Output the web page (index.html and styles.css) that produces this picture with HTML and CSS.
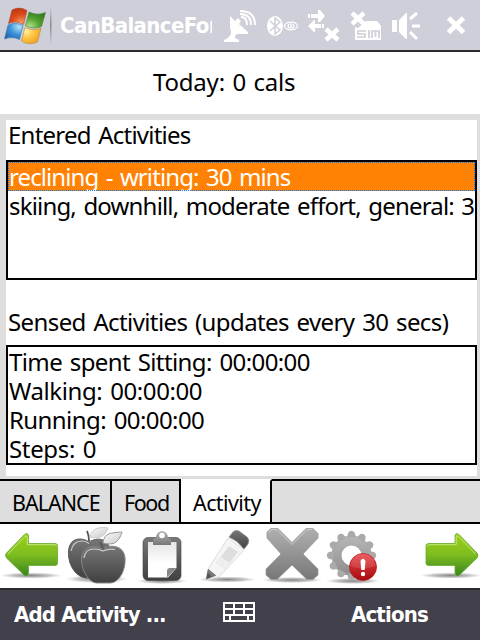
FILE: index.html
```
<!DOCTYPE html>
<html lang="en">
<head>
<meta charset="utf-8">
<title>CanBalance</title>
<link rel="stylesheet" href="styles.css">
</head>
<body>
<div class="screen">
  <header class="titlebar">
    <svg class="flag" width="54" height="50" viewBox="0 0 54 50">
      <defs>
        <radialGradient id="fr" cx=".7" cy=".9" r="1"><stop offset="0" stop-color="#f79b62"/><stop offset=".5" stop-color="#dc4c1c"/><stop offset="1" stop-color="#b8320e"/></radialGradient>
        <radialGradient id="fg" cx=".2" cy=".9" r="1"><stop offset="0" stop-color="#b5e08a"/><stop offset=".5" stop-color="#55a330"/><stop offset="1" stop-color="#2f7d1c"/></radialGradient>
        <radialGradient id="fb" cx=".8" cy=".2" r="1"><stop offset="0" stop-color="#b6e4fb"/><stop offset=".5" stop-color="#3e93d8"/><stop offset="1" stop-color="#1660ae"/></radialGradient>
        <radialGradient id="fy" cx=".2" cy=".2" r="1"><stop offset="0" stop-color="#fff4a0"/><stop offset=".5" stop-color="#fdc23c"/><stop offset="1" stop-color="#ee9420"/></radialGradient>
        <linearGradient id="sep" x1="0" y1="0" x2="0" y2="1"><stop offset="0" stop-color="#808080" stop-opacity="0"/><stop offset=".5" stop-color="#888"/><stop offset="1" stop-color="#808080" stop-opacity="0"/></linearGradient>
      </defs>
      <path d="M12 10Q19 6 27 10.500L23.500 24.500Q16 20 8.500 23.500Z" fill="url(#fr)" stroke="#a85038" stroke-width=".6"/>
      <path d="M29 12Q37 16 45.500 12.500L41.500 26.500Q33 30 25.500 25.500Z" fill="url(#fg)" stroke="#4c8038" stroke-width=".6"/>
      <path d="M8 25Q15 21.500 23 25.500L19.500 39.500Q12 36 4.500 39Z" fill="url(#fb)" stroke="#4478a8" stroke-width=".6"/>
      <path d="M25 27.500Q33 31.500 41 28L37.500 42Q29 46 21.500 41Z" fill="url(#fy)" stroke="#b08848" stroke-width=".6"/>
      <rect x="50" y="7" width="1.500" height="37" fill="url(#sep)"/>
    </svg>
    <h1 class="title">CanBalanceFor</h1>
    <svg class="status" width="265" height="50" viewBox="215 0 265 50" fill="#fff" stroke="none">
      <path d="M230 16L235 21L238 18L241 21L239 24L248 32V34H237L235 36V38L239 40V42H224V40L228 38L231 34V31L230 29Z"/>
      <g fill="none" stroke="#fff" stroke-width="2"><path d="M241 17Q247 17 247 25M240 14Q251 14 251 25M240 11Q255 11 255 25"/></g>
      <ellipse cx="275" cy="26" rx="8" ry="10"/>
      <path d="M270 21L280 30L275 34V18L280 22L270 31" fill="none" stroke="#cecfd8" stroke-width="1.500"/>
      <g fill="none" stroke="#fff" stroke-width="1.200"><ellipse cx="291" cy="26" rx="6.500" ry="3.800"/><ellipse cx="291" cy="26" rx="3" ry="2"/></g><circle cx="291" cy="26" r="1"/>
      <path d="M308 14H310V18H308ZM311 14H318V10H320L325 16L320 22H318V18H311ZM308 26L314 20H315V24H321V28H315V32H314ZM322 24H324V28H322Z"/>
      <path d="M326 29L338 40M338 29L326 40M352 13L364 24M364 13L352 24" stroke="#fff" stroke-width="4.500"/>
      <path d="M355 27L358 28L364 23L366 21H377L381 26V40H355Z"/>
      <path d="M366 31H358V34H365V37H357M369 30V38M372 38V31H379V38M375.500 31V37" fill="none" stroke="#cecfd8" stroke-width="1.700"/>
      <path d="M392 20H397V32H392ZM399 20L406 13H407V39H406L399 32Z"/>
      <path d="M410 19L417 13M412 26H420M410 32L417 39" fill="none" stroke="#fff" stroke-width="3"/>
      <path d="M448.500 18L463.500 32.500M463.500 18L448.500 32.500" stroke="#fff" stroke-width="5"/>
    </svg>
  </header>
  <div class="today"><span class="t0">Today: 0 cals</span></div>
  <main class="frame">
    <section class="panel">
      <h2 class="label entered"><span class="t1">Entered Activities</span></h2>
      <ul class="list">
        <li class="selected"><span class="t2">reclining - writing: 30 mins</span></li>
        <li><span class="t3">skiing, downhill, moderate effort, general: 3</span></li>
      </ul>
      <h2 class="label sensed"><span class="t4">Sensed Activities (updates every 30 secs)</span></h2>
      <ul class="list">
        <li><span class="t5">Time spent Sitting: 00:00:00</span></li>
        <li><span class="t6">Walking: 00:00:00</span></li>
        <li><span class="t7">Running: 00:00:00</span></li>
        <li><span class="t8">Steps: 0</span></li>
      </ul>
    </section>
  </main>
  <nav class="tabs">
    <div class="tab balance"><span>BALANCE</span></div>
    <div class="tab food"><span>Food</span></div>
    <div class="tab active"><span>Activity</span></div>
    <div class="rest"></div>
  </nav>
  <div class="toolbar">
    <svg width="480" height="64" viewBox="0 524 480 64">
      <defs>
        <linearGradient id="gr" x1="0" y1="0" x2="0" y2="1"><stop offset="0" stop-color="#9bd018"/><stop offset=".5" stop-color="#7fbd20"/><stop offset="1" stop-color="#368520"/></linearGradient>
        <linearGradient id="ap" x1="0" y1="0" x2="0" y2="1"><stop offset="0" stop-color="#777"/><stop offset="1" stop-color="#404040"/></linearGradient>
        <linearGradient id="lg" x1="0" y1="0" x2="0" y2="1"><stop offset="0" stop-color="#b0b0b0"/><stop offset="1" stop-color="#777"/></linearGradient>
        <linearGradient id="gg" gradientUnits="userSpaceOnUse" x1="0" y1="-24" x2="0" y2="24"><stop offset="0" stop-color="#bcbcbc"/><stop offset="1" stop-color="#888"/></linearGradient>
        <linearGradient id="pg" x1="0" y1="0" x2="0" y2="1"><stop offset="0" stop-color="#e4e4e4"/><stop offset=".6" stop-color="#fff"/></linearGradient>
        <linearGradient id="lf" x1="0" y1="0" x2="1" y2="1"><stop offset="0" stop-color="#fafafa"/><stop offset="1" stop-color="#cacaca"/></linearGradient>
        <linearGradient id="rd" x1="0" y1="0" x2="0" y2="1"><stop offset="0" stop-color="#e8464a"/><stop offset="1" stop-color="#a80c10"/></linearGradient>
        <radialGradient id="sh"><stop offset="0" stop-color="#777" stop-opacity=".9"/><stop offset=".6" stop-color="#888" stop-opacity=".5"/><stop offset="1" stop-color="#999" stop-opacity="0"/></radialGradient>
      </defs>
      <g fill="url(#sh)">
        <ellipse cx="31" cy="575.500" rx="31" ry="3"/><ellipse cx="97" cy="579" rx="31" ry="4"/><ellipse cx="162" cy="581" rx="25" ry="3"/><ellipse cx="227" cy="579.500" rx="29" ry="3"/><ellipse cx="292" cy="580" rx="30" ry="3"/><ellipse cx="353" cy="581" rx="27" ry="3"/><ellipse cx="451" cy="575.500" rx="31" ry="3"/>
      </g>
      <g id="arrow">
        <path d="M6.500 553L24 535Q28 531.500 28.500 536V543.500H55Q57.500 543.500 57.500 546V563Q57.500 565.500 55 565.500H28.500V573Q28 577.500 24 575L6.500 558Q4.500 555 6.500 553Z" fill="url(#gr)" stroke="#6aaa2c" stroke-width=".8"/>
        <path d="M8 554L25 536.500Q27 535 27.300 537V544.700H55Q56.300 545 56.300 546.500" fill="none" stroke="#c4e77c" stroke-width="1"/>
      </g>
      <use href="#arrow" transform="translate(483.500 0) scale(-1 1)"/>
      <g stroke="#555" stroke-width="1">
        <path d="M89 542C82 537 69 537 68.500 552C68 566 77 578 87 578H98C107 576 112 565 110 550C108 538 97 537 89 542Z" fill="url(#ap)"/>
        <path d="M89 541Q89 535 87 531" fill="none" stroke-width="1.800"/>
        <path d="M90 537C92 527 101 527 108 528C105 537 99 539 90 537Z" fill="url(#lf)" stroke="#ccc"/>
        <path d="M102 549C95 544 82 546 81.500 559C81 570 89 583 97 583H110C119 583 126 570 125 558C124 545 110 544 102 549Z" fill="url(#ap)" stroke="#888"/>
        <path d="M103 549Q102 545 100 542" fill="none" stroke-width="1.800"/>
        <path d="M103 543C104 532 112 533 122 532C119 542 114 546 103 543Z" fill="url(#lf)" stroke="#999"/>
      </g>
      <path d="M71 551Q73 541 82 541Q86 541 89 543.500M84 558Q85 549 94 549Q99 549 103 551Q109 548.500 115 549.500" fill="none" stroke="#ccc" stroke-width="1.200"/>
      <rect x="143" y="537.500" width="38" height="43" rx="5" fill="url(#ap)" stroke="#444" stroke-width=".6"/>
      <path d="M148 542H176.500V568L168 577.500H148Z" fill="url(#pg)"/>
      <path d="M176.500 568L167 577.500V571Q167 568 170 568Z" fill="#888"/>
      <path d="M153 545V541Q153 538 156 538C156 529 168 529 168 538Q171 538 171 541V545Z" fill="url(#lg)"/><circle cx="162" cy="535.500" r="2.800" fill="#fff"/>
      <path d="M208 569L228 538L244 550L219 577L206 579.500Z" fill="#f5f5f5" stroke="#ddd" stroke-width="1"/>
      <path d="M216 563L229 546L238 552L225 569Z" fill="#dedede"/><path d="M216 563L221 557L230 563L225 569Z" fill="#eee"/>
      <path d="M208 569L216 575.500L206 579.500Z" fill="#555"/><path d="M208 569L216 575.500L212 577L208 573Z" fill="#777"/>
      <path d="M229 537L233 532Q235 529.500 239 531L247 537Q250 540 248 544L244 549Q237 540 229 537Z" fill="url(#ap)" stroke="#888" stroke-width=".8"/>
      <path d="M267 532L271 528.500H278L292 542.500L306 528.500H313L318 533.500V538L303 554L318 569V575L313 579.500H307L292 565L277 579.500H271L266 575V569L281 554L267 538Z" fill="url(#lg)" stroke="#999" stroke-width=".8" stroke-linejoin="round"/>
      <path d="M268 532.500L272 529.500H277L292 544.500L307 529.500H312" fill="none" stroke="#ccc" stroke-width="1"/>
      <g transform="translate(351.500 555.500)">
        <circle r="15" fill="none" stroke="url(#gg)" stroke-width="10"/>
        <g id="teeth" fill="#aaa"><path id="k" d="M-4.500-18L-3.200-23Q0-26.500 3.200-23L4.500-18Z"/><use href="#k" transform="rotate(30)"/><use href="#k" transform="rotate(60)"/></g>
        <use href="#teeth" transform="rotate(90)"/><use href="#teeth" transform="rotate(180)"/><use href="#teeth" transform="rotate(270)"/>
      </g>
      <circle cx="363" cy="567" r="13.500" fill="url(#rd)" stroke="#b81c20" stroke-width=".8"/>
      <path d="M350.500 566A12.500 12.500 0 0 1 375.500 566Q363 571 350.500 566Z" fill="#fff" fill-opacity=".12"/>
      <path d="M360.500 561Q363 556.500 365.500 561L364.700 570H361.300Z" fill="#fff"/><circle cx="363" cy="574" r="2.200" fill="#fff"/>
    </svg>
  </div>
  <footer class="menubar">
    <div class="add"><span>Add Activity ...</span></div>
    <svg class="keyboard" width="32" height="20" viewBox="0 0 32 20" shape-rendering="crispEdges"><path d="M0 0H32V20H0Z" fill="#fff"/><path fill="#42404a" d="M2 2H10V6H2ZM12 2H20V6H12ZM22 2H30V6H22ZM2 8H10V12H2ZM12 8H20V12H12ZM22 8H30V12H22ZM2 14H6V18H2ZM8 14H24V18H8ZM26 14H30V18H26Z"/></svg>
    <div class="actions"><span>Actions</span></div>
  </footer>
</div>
</body>
</html>
```
FILE: styles.css
```
* { box-sizing: border-box; }
body { margin: 0; background: #fff; color: #000; font-family: "Noto Sans", "DejaVu Sans", sans-serif; font-size: 24px; line-height: 29px; }
.screen { width: 480px; height: 640px; display: flex; flex-direction: column; overflow: hidden; }
svg { display: block; flex: none; }
span { white-space: pre; letter-spacing: -0.6px; word-spacing: 2px; }
.t0 { letter-spacing: -0.2px; word-spacing: 1.5px; }
.t1 { letter-spacing: -0.77px; }
.t2 { letter-spacing: -0.9px; }
.t3 { letter-spacing: -0.82px; }
.t4 { letter-spacing: -0.6px; }
.t6 { letter-spacing: -0.4px; }
.t7 { letter-spacing: -0.58px; }
.t8 { letter-spacing: -0.35px; }
.titlebar { height: 52px; border-bottom: 2px solid #2b2b2f; background: #cecfd8; display: flex; }
.title { margin: 0 3px 0 6px; width: 152px; overflow: hidden; white-space: nowrap; color: #fff; font-family: "DejaVu Sans Condensed", sans-serif; font-stretch: condensed; font-size: 22px; line-height: 52px; letter-spacing: -0.6px; }
.today { height: 62px; padding: 15px 0 0 153px; }
.frame { height: 365px; background: #dedede; padding: 6px 3px 3px 6px; }
.panel { height: 356px; background: #fff; }
.label { margin: 0; font-size: 24px; font-weight: normal; padding-left: 2px; height: 40px; }
.sensed { height: 65px; padding-top: 27px; }
.list { list-style: none; margin: 0; padding: 0; height: 120px; border: 2px solid #000; }
.list li { height: 29px; padding-left: 1px; }
.list .selected { background: #ff8204; color: #fff; outline: 1px dotted #007dfb; outline-offset: -1px; }
.tabs { height: 45px; display: flex; background: #dedede; font-size: 21.5px; }
.tab, .rest { border-top: 2px solid #000; border-bottom: 2px solid #000; }
.tab { border-right: 2px solid #000; padding: 7px 0 0 12px; }
.balance { width: 112px; }
.balance span { letter-spacing: -1px; }
.food { width: 69px; }
.food span { letter-spacing: -1.4px; }
.active { width: 91px; background: #fff; border-top-color: #fff; }
.rest { flex: 1; }
.toolbar { height: 64px; background: #fff; }
.menubar { height: 52px; border-top: 2px solid #2b2b2f; background: #42404a; color: #fff; display: flex; font-family: "DejaVu Sans Condensed", sans-serif; font-stretch: condensed; font-size: 22px; font-weight: bold; line-height: 50px; }
.menubar span { letter-spacing: -0.85px; word-spacing: 0; }
.add { width: 223px; padding-left: 14px; }
.keyboard { margin-top: 12px; }
.actions { padding-left: 96px; }
```
